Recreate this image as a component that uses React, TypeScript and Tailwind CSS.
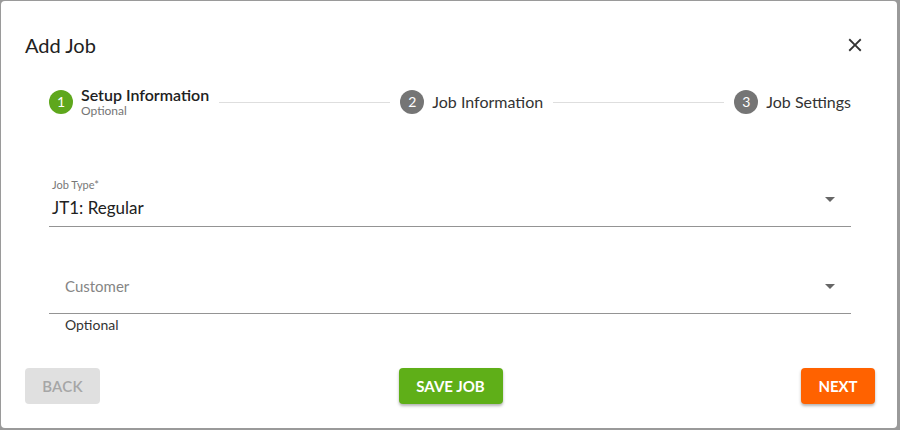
import React from "react";

const font = { fontFamily: "Lato, 'Noto Sans', sans-serif" };

function StepIcon({ n, active }: { n: number; active?: boolean }) {
  return (
    <div
      className={`w-6 h-6 rounded-full flex items-center justify-center text-white text-[14px] leading-none shrink-0 ${
        active ? "bg-[#5ea71c]" : "bg-[#757575]"
      }`}
    >
      {n}
    </div>
  );
}

function Caret({ className = "" }: { className?: string }) {
  return (
    <svg width="10" height="5" viewBox="0 0 10 5" className={`shrink-0 ${className}`}>
      <path d="M0 0h10L5 5z" fill="#666" />
    </svg>
  );
}

export default function App() {
  return (
    <div
      className="w-[900px] h-[430px] bg-[#9a9a9a] flex pl-[1px] pt-[1px] pr-[3px] pb-[2px]"
      style={font}
    >
      <div className="flex-1 bg-white rounded-[4px] flex flex-col">
        {/* header */}
        <div className="flex items-center justify-between pl-6 pr-[31px] pt-[28px]">
          <h2 className="text-[20px] leading-8 text-[#212121]">Add Job</h2>
          <svg width="22" height="22" viewBox="0 0 24 24">
            <path
              d="M19 6.41L17.59 5 12 10.59 6.41 5 5 6.41 10.59 12 5 17.59 6.41 19 12 13.41 17.59 19 19 17.59 13.41 12z"
              fill="#333"
            />
          </svg>
        </div>

        {/* stepper */}
        <div className="flex items-center h-[34px] mt-6 pl-12 pr-[46px]">
          <div className="flex items-center gap-2">
            <StepIcon n={1} active />
            <div className="flex flex-col">
              <span className="text-[16px] leading-[18px] font-semibold text-[#212121]">
                Setup Information
              </span>
              <span className="text-[12px] leading-[14px] text-[#757575]">Optional</span>
            </div>
          </div>
          <div className="flex-1 h-px bg-[#dedede] mx-[10px]" />
          <div className="flex items-center gap-2">
            <StepIcon n={2} />
            <span className="text-[16px] leading-[18px] text-[#333]">Job Information</span>
          </div>
          <div className="flex-1 h-px bg-[#dedede] mx-[10px]" />
          <div className="flex items-center gap-2">
            <StepIcon n={3} />
            <span className="text-[16px] leading-[18px] text-[#333]">Job Settings</span>
          </div>
        </div>

        {/* fields */}
        <div className="pl-12 pr-[46px] mt-[58px]">
          <div className="border-b border-[#949494] pb-[6px]">
            <div className="pl-[3px] text-[11px] leading-4 text-[#777]">Job Type*</div>
            <div className="flex items-start justify-between mt-[3px] pl-[3px] pr-4">
              <span className="text-[17px] leading-6 text-[#212121]">JT1: Regular</span>
              <Caret className="mt-[1px]" />
            </div>
          </div>

          <div className="border-b border-[#949494] pb-[15px] mt-[47px]">
            <div className="flex items-center justify-between pl-4 pr-4">
              <span className="text-[15px] leading-6 text-[#858585]">Customer</span>
              <Caret />
            </div>
          </div>
          <div className="pl-4 mt-[3px] text-[14px] leading-4 text-[#333]">Optional</div>
        </div>

        {/* actions */}
        <div className="flex items-center justify-between pl-6 pr-[22px] mt-[35px]">
          <button className="w-[75px] h-9 rounded-[4px] bg-[#e0e0e0] text-[#a6a6a6] text-[15px] font-semibold tracking-[0.2px]">
            BACK
          </button>
          <button className="w-[104px] h-9 rounded-[4px] bg-[#5faf18] text-white text-[15px] font-bold shadow-[0_2px_3px_rgba(0,0,0,0.3)]">
            SAVE JOB
          </button>
          <button className="w-[74px] h-9 rounded-[4px] bg-[#ff6200] text-white text-[15px] font-bold shadow-[0_2px_3px_rgba(0,0,0,0.3)]">
            NEXT
          </button>
        </div>
      </div>
    </div>
  );
}
